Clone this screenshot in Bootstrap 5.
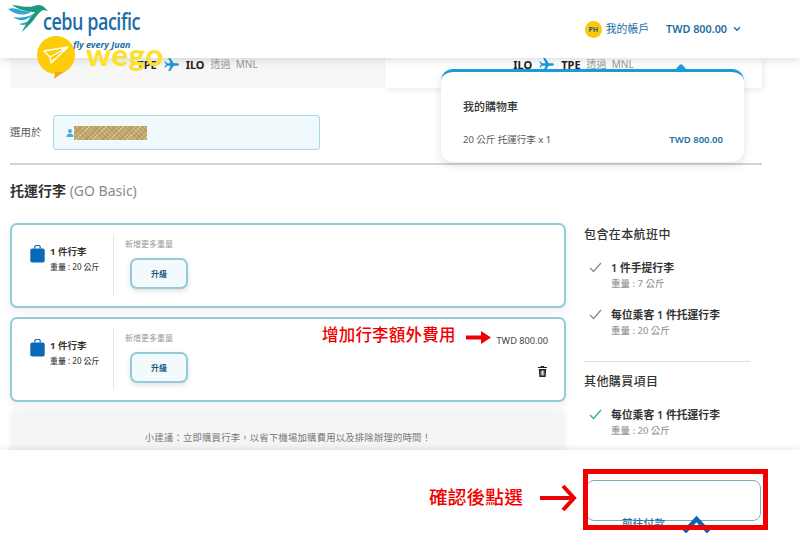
<!DOCTYPE html>
<html lang="zh-Hant">
<head>
<meta charset="utf-8">
<title>cebu pacific</title>
<link href="https://cdn.jsdelivr.net/npm/bootstrap@5.3.0/dist/css/bootstrap.min.css" rel="stylesheet">
<style>
html,body{height:533px;overflow:hidden}
body{font-family:"Noto Sans","Noto Sans CJK TC",sans-serif;color:#333;position:relative;width:800px;font-size:10px;background:#fff}
.hdr{height:58px;background:#fff;box-shadow:0 2px 8px rgba(0,0,0,.14);position:relative;z-index:3;padding-right:59px}
.acct{color:#1c6ea4;font-size:10.8px}
.ph{width:17px;height:17px;border-radius:50%;background:#fbc80a;color:#1c5f8e;font-size:7px;font-weight:700;line-height:17px;text-align:center;margin-right:4px}
.tot{color:#1c6ea4;font-size:10.8px;font-weight:600;margin-left:17px}
.chv{margin-left:6px}
.logo{position:absolute;left:8px;top:3px;z-index:4;width:140px;height:46px}
.cebu{position:absolute;left:35px;top:6px;font-family:"Open Sans",sans-serif;font-size:22.5px;line-height:26px;color:#1e6da8;font-weight:600;letter-spacing:-.6px;white-space:nowrap;transform:scaleX(.8);transform-origin:left center}
.juan{position:absolute;left:65px;top:36px;font-size:9px;line-height:12px;font-weight:700;font-style:italic;color:#1e6da8;white-space:nowrap}
.wegomark{position:absolute;left:37px;top:36px;z-index:5}
.wegotxt{position:absolute;left:86px;top:36px;z-index:5;font-family:"Lato",sans-serif;font-weight:900;font-size:31px;line-height:36px;color:#fde02e;letter-spacing:.6px}
.wrap{padding-left:10px;width:762px}
.flts{height:30px}
.flt{height:30px;color:#222;font-size:11px;font-weight:700;line-height:1;padding-top:1px}
.flt-a{width:375px;background:#f7f7f7}
.flt-b{width:377px;background:#fff;box-shadow:2px 2px 6px rgba(0,0,0,.08)}
.via{color:#999;font-weight:400;font-size:10px;margin-left:6px}
.pln{margin:-1px 7px 0}
.seat{margin-top:27px;height:35px}
.seat-lbl{width:43px;font-size:10.5px;color:#555}
.seat-box{width:267px;height:35px;background:#f0f9fc;border:1px solid #a9d9e3;border-radius:3px;padding-left:12px}
.redact{width:73px;height:14px;background:repeating-linear-gradient(45deg,rgba(170,140,90,.55) 0 1px,transparent 1px 3px),repeating-linear-gradient(-45deg,#c9ad72 0 2px,#dcc795 2px 3px,#b89c68 3px 4px)}
.sep{height:2px;background:#d4d4d4;margin-top:13px}
.ttl{font-size:14px;font-weight:600;line-height:20px;margin-top:16px;color:#333}
.ttl span{color:#8a8a8a;font-weight:400}
.cols{margin-top:22px}
.lft{width:556px}
.rgt{margin-left:18px;width:166px}
.bag{height:85px;border:2px solid #93cbd8;border-radius:7px;background:#fff;box-shadow:0 3px 8px rgba(0,0,0,.07);margin-bottom:9px;position:relative;padding:12px 16px 10px 18px}
.bagic{margin:8px 5px 0 0;flex:none}
.info{width:63px;padding-top:8px}
.info b{font-size:9.5px;font-weight:700;color:#333;display:block;line-height:14px}
.info small{font-size:8px;font-weight:500;color:#444;display:block;line-height:14px;margin-top:1px}
.vline{width:1px;height:60px;background:#e6e6e6;margin:-2px 11px 0 0}
.more{font-size:8px;color:#999;line-height:12px;margin-top:1px}
.upg{width:58px;height:31px;margin:8px 0 0 5px;padding:0;background:#f2fafc;border:2px solid #93cbd8;border-radius:7px;color:#1d5b7c;font-size:8px;font-weight:700;box-shadow:0 2px 5px rgba(0,0,0,.12)}
.amt{font-size:9.2px;color:#444;line-height:14px;margin-top:3px}
.trash{margin:18px 1px 0 0}
.tip{height:60px;background:#f5f5f5;border-radius:6px 6px 0 0;text-align:center;font-size:9.3px;color:#777;padding-top:20px;letter-spacing:.25px;box-shadow:0 -2px 5px rgba(0,0,0,.04)}
.side-h{font-size:12px;font-weight:500;line-height:18px;color:#333;letter-spacing:.4px}
.side-top{margin-top:3px}
.inc{margin-top:16px;padding-left:5px}
.inc svg{margin-top:2px;margin-right:9px;flex:none}
.inc b{display:block;font-size:10.8px;font-weight:600;line-height:15px;color:#333}
.inc small{display:block;font-size:9.5px;line-height:14px;font-weight:500;color:#999;margin-top:2px}
.sep2{height:1px;background:#dcdcdc;width:166px;margin:23px 0 11px}
.foot{position:absolute;left:0;right:0;top:450px;height:83px;background:#fff;box-shadow:0 -2px 6px rgba(0,0,0,.08);z-index:2;padding:30px 39px 0 586px}
.paybtn{width:175px;height:41px;border:1px solid #7faabd;border-radius:8px;background:#fff;display:block;padding:0}
.paytxt{position:absolute;left:622px;top:516px;font-size:10.5px;line-height:14px;color:#1c6ea4;z-index:4;letter-spacing:.3px;font-weight:500}
.chev{position:absolute;left:683px;top:514px;z-index:4}
.cart{position:absolute;left:441px;top:69px;width:303px;height:93px;background:#fff;border-top:3px solid #1a9ad6;border-radius:12px;box-shadow:0 3px 10px rgba(0,0,0,.12);z-index:2;padding:27px 21px 0 22px}
.cart-t{font-size:11px;line-height:16px;color:#333;font-weight:500}
.cart-r{font-size:9.5px;color:#555;margin-top:18px;line-height:14px}
.cart-r b{color:#1c6ea4;font-weight:600;font-size:9.5px}
.caret{position:absolute;left:675px;top:64px;z-index:3}
.note{position:absolute;color:#f00000;z-index:7;line-height:1;white-space:nowrap;font-weight:500}
.n1{left:322px;top:327px;font-size:16.5px;letter-spacing:.2px}
.n2{left:429px;top:488px;font-size:18.7px;letter-spacing:.1px}
.arr{position:absolute;z-index:7}
.arr1{left:466px;top:331px}
.arr2{left:540px;top:484px}
.redbox{position:absolute;left:583px;top:469px;width:185px;height:61px;border:5px solid #f00000;z-index:5}
</style>
</head>
<body>
<header class="hdr d-flex align-items-center justify-content-end">
  <div class="ph">PH</div>
  <div class="acct">我的帳戶</div>
  <div class="tot">TWD 800.00</div>
  <svg class="chv" width="8" height="6" viewBox="0 0 8 6"><path d="M1 1.200 4 4.200 7 1.200" fill="none" stroke="#1c6ea4" stroke-width="1.400"/></svg>
</header>

<div class="logo">
  <svg width="42" height="34" viewBox="0 0 42 34" class="position-absolute top-0 start-0">
    <path d="M0 6C8 3 14 10 24 8 17 14 7 12 0 6Z" fill="#2aa6d8"/>
    <path d="M5 14C12 15 18 15 25 11 20 18 11 19 5 14Z" fill="#2aa6d8"/>
    <path d="M11 21C17 20 22 18 26 14 24 20 17 24 11 21Z" fill="#2aa6d8"/>
    <path d="M4 2C13 3 20 5 26 3 30 1 34 2 36 4L40 8 35 7C31 9 28 14 24 19L14 29C18 20 23 13 27 9 20 9 11 7 4 2Z" fill="#1c9a7e"/>
  </svg>
  <span class="cebu">cebu pacific</span>
  <span class="juan">fly every Juan</span>
</div>
<svg class="wegomark" width="40" height="44" viewBox="0 0 40 44">
  <circle cx="19" cy="19" r="19" fill="#fdcd07"/>
  <path d="M18 36 17 43 27 36Z" fill="#f5a623"/>
  <path d="M7 15 31 11 14 27 13 21ZM13 21 31 11M14 27 17 23" fill="none" stroke="#fff" stroke-width="1.300" stroke-linejoin="round"/>
</svg>
<div class="wegotxt">wego</div>

<main class="wrap">
  <div class="flts d-flex">
    <div class="flt flt-a d-flex align-items-start justify-content-center">
      <span>TPE</span>
      <svg class="pln" width="15" height="13" viewBox="0 0 16 14"><path d="M0 5.700 2.300 7 .8 5V3L3 5.700H7L4.500 0H6.500L10.500 5.700H14C15.500 5.700 16 6.500 16 7S15.500 8.300 14 8.300H10.500L6.500 14H4.500L7 8.300H3L.8 11V9L2.300 7Z" fill="#1a9ad6"/></svg>
      <span>ILO</span><span class="via">透過&nbsp; MNL</span>
    </div>
    <div class="flt flt-b d-flex align-items-start justify-content-center">
      <span>ILO</span>
      <svg class="pln" width="15" height="13" viewBox="0 0 16 14"><path d="M0 5.700 2.300 7 .8 5V3L3 5.700H7L4.500 0H6.500L10.500 5.700H14C15.500 5.700 16 6.500 16 7S15.500 8.300 14 8.300H10.500L6.500 14H4.500L7 8.300H3L.8 11V9L2.300 7Z" fill="#1a9ad6"/></svg>
      <span>TPE</span><span class="via">透過&nbsp; MNL</span>
    </div>
  </div>

  <div class="seat d-flex align-items-center">
    <div class="seat-lbl">選用於</div>
    <div class="seat-box d-flex align-items-center">
      <svg width="8" height="8" viewBox="0 0 8 8"><circle cx="4" cy="2" r="2" fill="#48aee0"/><path d="M.5 8C.5 5.500 2 4.500 4 4.500S7.500 5.500 7.500 8Z" fill="#48aee0"/></svg>
      <div class="redact"></div>
    </div>
  </div>
  <div class="sep"></div>
  <div class="ttl">托運行李 <span>(GO Basic)</span></div>

  <div class="cols d-flex">
    <div class="lft">
      <div class="bag d-flex">
        <svg class="bagic" width="15" height="18" viewBox="0 0 16 20"><path d="M5 4V2C5 1 6 .5 7 .5H9C10 .5 11 1 11 2V4" fill="none" stroke="#0a68b8" stroke-width="1.300"/><rect y="4" width="16" height="15.500" rx="2" fill="#0a68b8"/></svg>
        <div class="info"><b>1 件行李</b><small>重量 : 20 公斤</small></div>
        <div class="vline"></div>
        <div>
          <div class="more">新增更多重量</div>
          <button class="upg" type="button">升級</button>
        </div>
      </div>
      <div class="bag d-flex">
        <svg class="bagic" width="15" height="18" viewBox="0 0 16 20"><path d="M5 4V2C5 1 6 .5 7 .5H9C10 .5 11 1 11 2V4" fill="none" stroke="#0a68b8" stroke-width="1.300"/><rect y="4" width="16" height="15.500" rx="2" fill="#0a68b8"/></svg>
        <div class="info"><b>1 件行李</b><small>重量 : 20 公斤</small></div>
        <div class="vline"></div>
        <div>
          <div class="more">新增更多重量</div>
          <button class="upg" type="button">升級</button>
        </div>
        <div class="ms-auto d-flex flex-column align-items-end">
          <div class="amt">TWD 800.00</div>
          <svg class="trash" width="9" height="11" viewBox="0 0 9 11"><path d="M3 0H6L6.500 1H9V2H0V1H2.500ZM.8 3H8.200L7.600 11H1.400ZM2.800 4.500V9.500H3.600V4.500ZM4.100 4.500V9.500H4.900V4.500ZM5.400 4.500V9.500H6.200V4.500Z" fill-rule="evenodd" fill="#222"/></svg>
        </div>
      </div>
      <div class="tip">小建議：立即購買行李，以省下機場加購費用以及排除辦理的時間！</div>
    </div>
    <aside class="rgt">
      <div class="side-h side-top">包含在本航班中</div>
      <div class="inc d-flex">
        <svg width="13" height="11" viewBox="0 0 13 11"><path d="M1 6 4.500 9.500 12 1" fill="none" stroke="#888" stroke-width="1.200"/></svg>
        <div><b>1 件手提行李</b><small>重量 : 7 公斤</small></div>
      </div>
      <div class="inc d-flex">
        <svg width="13" height="11" viewBox="0 0 13 11"><path d="M1 6 4.500 9.500 12 1" fill="none" stroke="#888" stroke-width="1.200"/></svg>
        <div><b>每位乘客 1 件托運行李</b><small>重量 : 20 公斤</small></div>
      </div>
      <div class="sep2"></div>
      <div class="side-h">其他購買項目</div>
      <div class="inc d-flex">
        <svg width="13" height="11" viewBox="0 0 13 11"><path d="M1 6 4.500 9.500 12 1" fill="none" stroke="#27b3a0" stroke-width="1.400"/></svg>
        <div><b>每位乘客 1 件托運行李</b><small>重量 : 20 公斤</small></div>
      </div>
    </aside>
  </div>
</main>

<svg class="caret" width="12" height="6" viewBox="0 0 12 6"><path d="M0 6 5 .5H7L12 6Z" fill="#1a9ad6"/></svg>
<div class="cart">
  <div class="cart-t">我的購物車</div>
  <div class="cart-r d-flex justify-content-between"><span>20 公斤 托運行李 x 1</span><b>TWD 800.00</b></div>
</div>

<footer class="foot"><button class="paybtn" type="button" aria-label="前往付款"></button></footer>
<div class="paytxt">前往付款</div>
<svg class="chev" width="27" height="19" viewBox="0 0 27 19"><path d="M1.500 18 13.500 5 25.500 18" fill="none" stroke="#0a68b8" stroke-width="4.500"/></svg>

<div class="note n1">增加行李額外費用</div>
<svg class="arr arr1" width="25" height="13" viewBox="0 0 25 13"><path d="M0 4.500H15V0L25 6.500 15 13V8.500H0Z" fill="#f00000"/></svg>
<div class="note n2">確認後點選</div>
<svg class="arr arr2" width="37" height="28" viewBox="0 0 37 28"><path d="M0 14H33M23 2 34 14 23 26" fill="none" stroke="#f00000" stroke-width="4"/></svg>
<div class="redbox"></div>
</body>
</html>
